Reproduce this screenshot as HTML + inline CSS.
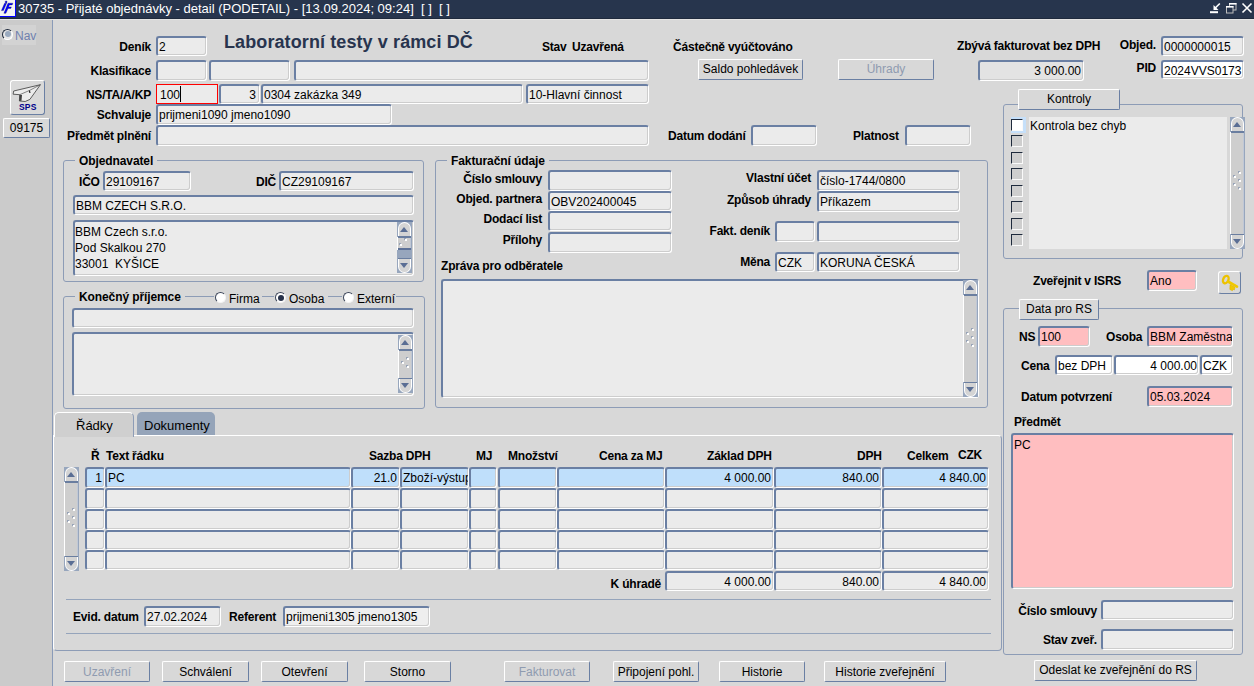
<!DOCTYPE html>
<html><head><meta charset="utf-8">
<style>
html,body{margin:0;padding:0}
body{width:1254px;height:686px;overflow:hidden;background:#d8d8d8;font-family:"Liberation Sans",sans-serif;font-size:12px;color:#000;position:relative}
div,span{box-sizing:border-box}
.a{position:absolute;white-space:nowrap}
.l{position:absolute;font-weight:bold;font-size:12px;line-height:14px;white-space:nowrap;color:#000;letter-spacing:-0.2px}
.r{text-align:right}
.f{position:absolute;background:#ebebeb;border-style:solid;border-width:2px 1px 1px 2px;border-color:#6a7fa3 #fff #fff #6a7fa3;box-shadow:inset -1px -1px 0 #cdcdcd;font-size:12px;line-height:16px;padding:0 1px 0 1px;white-space:nowrap;overflow:hidden;border-radius:3px}
.w{background:#fff}
.pk{background:#ffbec0}
.sel{background:#bfdffb}
.btn{position:absolute;background:#d8d8d8;border-style:solid;border-width:1px;border-color:#fff #6a7fa3 #6a7fa3 #fff;font-size:12px;line-height:18px;text-align:center;white-space:nowrap;border-radius:2px}
.dis{color:#8f9bb0}
.grp{position:absolute;border:1px solid #8d9cb6;border-radius:3px}
.gl{position:absolute;background:#d8d8d8;font-weight:bold;font-size:12px;line-height:14px;padding:0 4px;white-space:nowrap;letter-spacing:-0.1px}
</style></head><body>

<!-- title bar -->
<div class="a" style="left:0;top:0;width:1254px;height:19px;background:#27354d"></div>
<div class="a" style="left:0;top:18px;width:1254px;height:1px;background:#1f2a3d"></div>
<div class="a" style="left:0;top:19px;width:1254px;height:1px;background:#e4e4e4"></div>
<div class="a" style="left:0;top:0;width:16px;height:17px;background:#f4f4f4;border-right:1px solid #0000ff;border-bottom:1px solid #0000ff"></div>
<svg class="a" style="left:0;top:0" width="16" height="16" viewBox="0 0 16 16">
<g fill="#0000ff" stroke="#000040" stroke-width="0.3">
<path d="M4.6 3.2 L6.6 3.2 L3.4 10.6 L1.4 10.6 Z"/>
<circle cx="6.1" cy="1.9" r="1"/>
<path d="M8 3.2 L12.8 3.2 L12.2 4.9 L9.4 4.9 L8.6 6.9 L11.4 6.9 L10.8 8.4 L8 8.4 L5.9 13.3 L3.9 13.3 Z"/>
</g>
</svg>
<div class="a" style="left:18px;top:1px;font-size:13px;line-height:15px;color:#fff">30735 - Přijaté objednávky - detail (PODETAIL) - [13.09.2024; 09:24]&nbsp; [ ]&nbsp; [ ]</div>
<svg class="a" style="left:1208px;top:2px" width="46" height="13" viewBox="0 0 46 13">
<rect x="2" y="9.2" width="8" height="2" fill="#fff"/>
<path d="M11.8 1.5 L6.5 6.8" stroke="#fff" stroke-width="1.6"/>
<path d="M5.5 3 L5.5 8 L10.5 8 Z" fill="#fff"/>
<rect x="21.5" y="1.5" width="6.5" height="6.5" fill="none" stroke="#bdbdbd" stroke-width="1"/>
<rect x="21" y="1" width="7.5" height="1.6" fill="#fff"/>
<rect x="18.5" y="4.5" width="6.5" height="6.5" fill="#27354d" stroke="#bdbdbd" stroke-width="1"/>
<rect x="18" y="4" width="7.5" height="1.6" fill="#fff"/>
<path d="M34.5 1.5 L43.5 10.5 M43.5 1.5 L34.5 10.5" stroke="#fff" stroke-width="1.6"/>
</svg>

<!-- left panel -->
<div class="a" style="left:0;top:20px;width:52px;height:666px;background:#cbcbcb"></div>
<div class="a" style="left:52px;top:20px;width:1px;height:666px;background:#8a9bb8"></div>

<!-- left panel content -->
<div class="a" style="left:2px;top:25px;width:34px;height:20px;background:#d3d3d3"></div>
<div class="a" style="left:2px;top:28.5px;width:11px;height:11px;border-radius:50%;background:#e8e8e8;border:1px solid;border-color:#1e2a3c #fff #fff #1e2a3c"></div>
<div class="a" style="left:4.5px;top:31px;width:6px;height:6px;border-radius:50%;background:#9aaabf"></div>
<div class="a" style="left:15px;top:29px;font-size:12px;line-height:14px;color:#6f80ae">Nav</div>
<div class="a" style="left:10px;top:80px;width:35px;height:35px;background:#d9d9d9;border:1px solid;border-color:#fff #6a7fa3 #6a7fa3 #fff;border-radius:3px"></div>
<svg class="a" style="left:12px;top:83px" width="30" height="20" viewBox="0 0 30 20">
<path d="M1.7 8 L28.4 1.7 L17.9 16.4 L13.2 18.5 L7.4 18 L7.7 11.7 L1.1 11.2 Z" fill="#ececec" stroke="#3a3a3a" stroke-width="0.8"/>
<path d="M7.7 11.7 L17.4 7.5 L28.4 1.7" fill="none" stroke="#555" stroke-width="0.7"/>
<path d="M7.7 11.7 L10 12 L9.5 17.8 L7.4 18 Z" fill="#404040"/>
<path d="M17.4 7.5 L17.9 10" stroke="#202020" stroke-width="1.2"/>
</svg>
<div class="a" style="left:19px;top:103px;font:bold 8.5px 'Liberation Sans';color:#00008c;line-height:9px;letter-spacing:0.2px">SPS</div>
<div class="a" style="left:3px;top:118px;width:47px;height:20px;background:#d9d9d9;border:1px solid;border-color:#fff #6a7fa3 #6a7fa3 #fff;border-radius:2px;font-size:12px;line-height:18px;text-align:center">09175</div>

<!-- top fields -->
<div class="l r" style="right:1103px;top:40px">Deník</div>
<div class="f" style="left:156px;top:36px;width:51px;height:20px;padding-top:1px">2</div>
<div class="a" style="left:224px;top:32px;font:bold 18px 'Liberation Sans';line-height:20px;color:#28344e;letter-spacing:0.1px">Laboratorní testy v rámci DČ</div>
<div class="l" style="left:542px;top:40px">Stav</div>
<div class="l" style="left:572px;top:40px">Uzavřená</div>
<div class="l" style="left:673px;top:40px">Částečně vyúčtováno</div>
<div class="l" style="left:957px;top:39px">Zbývá fakturovat bez DPH</div>
<div class="l r" style="right:98px;top:38px">Objed.</div>
<div class="f" style="left:1161px;top:36px;width:83px;height:20px;padding-top:1px">0000000015</div>

<div class="l r" style="right:1103px;top:64px">Klasifikace</div>
<div class="f" style="left:156px;top:60px;width:51px;height:21px"></div>
<div class="f" style="left:209px;top:60px;width:81px;height:21px"></div>
<div class="f" style="left:294px;top:60px;width:355px;height:21px"></div>
<div class="btn" style="left:698px;top:59px;width:105px;height:21px;line-height:19px">Saldo pohledávek</div>
<div class="btn dis" style="left:838px;top:59px;width:96px;height:21px;line-height:19px">Úhrady</div>
<div class="f r" style="left:978px;top:60px;width:106px;height:21px;padding-top:1px;padding-right:2px;background:#e3e3e3">3 000.00</div>
<div class="l r" style="right:98px;top:61px">PID</div>
<div class="f w" style="left:1161px;top:60px;width:83px;height:19px;padding-top:1px">2024VVS0173</div>

<div class="l r" style="right:1103px;top:88px">NS/TA/A/KP</div>
<div class="a" style="left:156px;top:84px;width:62px;height:20px;border:1px solid #ff0000;background:#ebebeb;padding:2px 0 0 3px;line-height:16px">100</div>
<div class="a" style="left:180px;top:86px;width:1px;height:16px;background:#000"></div>
<div class="f r" style="left:219px;top:84px;width:41px;height:20px;padding-top:1px;padding-right:3px">3</div>
<div class="f" style="left:261px;top:84px;width:262px;height:20px;padding-top:1px">0304 zakázka 349</div>
<div class="f" style="left:526px;top:84px;width:123px;height:20px;padding-top:1px">10-Hlavní činnost</div>

<div class="l r" style="right:1103px;top:108px">Schvaluje</div>
<div class="f" style="left:156px;top:104px;width:236px;height:21px;padding-top:1px">prijmeni1090 jmeno1090</div>
<div class="l r" style="right:1103px;top:129px">Předmět plnění</div>
<div class="f" style="left:156px;top:125px;width:493px;height:21px"></div>
<div class="l" style="left:668px;top:129px">Datum dodání</div>
<div class="f" style="left:751px;top:125px;width:66px;height:21px"></div>
<div class="l" style="left:853px;top:129px">Platnost</div>
<div class="f" style="left:905px;top:125px;width:66px;height:21px"></div>


<!-- Objednavatel -->
<div class="grp" style="left:63px;top:160px;width:361px;height:122px"></div>
<div class="gl" style="left:75px;top:154px">Objednavatel</div>
<div class="l" style="left:79px;top:175px">IČO</div>
<div class="f" style="left:103px;top:171px;width:88px;height:20px;padding-top:1px">29109167</div>
<div class="l" style="left:256px;top:175px">DIČ</div>
<div class="f" style="left:279px;top:171px;width:135px;height:20px;padding-top:1px">CZ29109167</div>
<div class="f" style="left:73px;top:195px;width:341px;height:20px;padding-top:1px">BBM CZECH S.R.O.</div>
<div class="f" style="left:73px;top:220px;width:341px;height:56px;padding-top:2px;padding-left:0">BBM Czech s.r.o.<br>Pod Skalkou 270<br>33001&nbsp; KYŠICE</div>
<div class="a" style="left:397px;top:222px;width:15px;height:51px;background:#97a6bd"></div>
<div class="a" style="left:397px;top:237px;width:14px;height:13px;background:#cecece;border-left:1px solid #fff;border-right:1px solid #c0c8d6"></div>
<div class="a" style="left:398px;top:248px;width:13px;height:2px;background:#5e7297"></div>
<div class="a" style="left:398px;top:222px;width:13px;height:15px;background:#d4d4d4;border:1px solid #fff;border-bottom:0;border-radius:7px 7px 0 0"></div>
<div class="a" style="left:398px;top:236px;width:13px;height:1.5px;background:#6a7ea0"></div>
<div class="a" style="left:400.0px;top:227px;width:0;height:0;border-left:4.5px solid transparent;border-right:4.5px solid transparent;border-bottom:5px solid #5a6e94"></div>
<div class="a" style="left:398px;top:258px;width:13px;height:15px;background:#d4d4d4;border:1px solid #fff;border-top:0;border-radius:0 0 7px 7px"></div>
<div class="a" style="left:398px;top:257.5px;width:13px;height:1.5px;background:#6a7ea0"></div>
<div class="a" style="left:400.0px;top:263px;width:0;height:0;border-left:4.5px solid transparent;border-right:4.5px solid transparent;border-top:5px solid #5a6e94"></div>
<div class="a" style="left:405px;top:239px;width:2px;height:2px;background:#fff;box-shadow:-1px -1px 0 #98a4b8"></div><div class="a" style="left:400px;top:244px;width:2px;height:2px;background:#fff;box-shadow:-1px -1px 0 #98a4b8"></div>

<!-- Fakturacni udaje -->
<div class="grp" style="left:435px;top:160px;width:553px;height:248px"></div>
<div class="gl" style="left:447px;top:154px">Fakturační údaje</div>
<div class="l r" style="right:712px;top:172px">Číslo smlouvy</div>
<div class="f" style="left:548px;top:170px;width:124px;height:21px"></div>
<div class="l r" style="right:712px;top:192px">Objed. partnera</div>
<div class="f" style="left:548px;top:191px;width:124px;height:20px;padding-top:1px">OBV202400045</div>
<div class="l r" style="right:712px;top:212px">Dodací list</div>
<div class="f" style="left:548px;top:211px;width:124px;height:20px"></div>
<div class="l r" style="right:712px;top:233px">Přílohy</div>
<div class="f" style="left:548px;top:232px;width:124px;height:21px"></div>
<div class="l r" style="right:443px;top:171px">Vlastní účet</div>
<div class="f" style="left:817px;top:170px;width:143px;height:21px;padding-top:1px">číslo-1744/0800</div>
<div class="l r" style="right:443px;top:193px">Způsob úhrady</div>
<div class="f" style="left:817px;top:191px;width:143px;height:21px;padding-top:1px">Příkazem</div>
<div class="l r" style="right:484px;top:224px">Fakt. deník</div>
<div class="f" style="left:775px;top:221px;width:40px;height:21px"></div>
<div class="f" style="left:817px;top:221px;width:143px;height:21px"></div>
<div class="l r" style="right:484px;top:255px">Měna</div>
<div class="f" style="left:775px;top:252px;width:40px;height:20px;padding-top:1px">CZK</div>
<div class="f" style="left:817px;top:252px;width:143px;height:20px;padding-top:1px">KORUNA ČESKÁ</div>
<div class="l" style="left:441px;top:259px">Zpráva pro odběratele</div>
<div class="f" style="left:441px;top:279px;width:538px;height:119px"></div>
<div class="a" style="left:963px;top:280px;width:15px;height:117px;background:#97a6bd"></div>
<div class="a" style="left:963px;top:295px;width:14px;height:87px;background:#cecece;border-left:1px solid #fff;border-right:1px solid #c0c8d6"></div>
<div class="a" style="left:964px;top:280px;width:13px;height:15px;background:#d4d4d4;border:1px solid #fff;border-bottom:0;border-radius:7px 7px 0 0"></div>
<div class="a" style="left:964px;top:294px;width:13px;height:1.5px;background:#6a7ea0"></div>
<div class="a" style="left:966.0px;top:285px;width:0;height:0;border-left:4.5px solid transparent;border-right:4.5px solid transparent;border-bottom:5px solid #5a6e94"></div>
<div class="a" style="left:964px;top:382px;width:13px;height:15px;background:#d4d4d4;border:1px solid #fff;border-top:0;border-radius:0 0 7px 7px"></div>
<div class="a" style="left:964px;top:381.5px;width:13px;height:1.5px;background:#6a7ea0"></div>
<div class="a" style="left:966.0px;top:387px;width:0;height:0;border-left:4.5px solid transparent;border-right:4.5px solid transparent;border-top:5px solid #5a6e94"></div>
<div class="a" style="left:972px;top:329px;width:2px;height:2px;background:#fff;box-shadow:-1px -1px 0 #98a4b8"></div>
<div class="a" style="left:967px;top:333px;width:2px;height:2px;background:#fff;box-shadow:-1px -1px 0 #98a4b8"></div>
<div class="a" style="left:972px;top:337px;width:2px;height:2px;background:#fff;box-shadow:-1px -1px 0 #98a4b8"></div>
<div class="a" style="left:967px;top:341px;width:2px;height:2px;background:#fff;box-shadow:-1px -1px 0 #98a4b8"></div>
<div class="a" style="left:972px;top:345px;width:2px;height:2px;background:#fff;box-shadow:-1px -1px 0 #98a4b8"></div>

<!-- Konecny prijemce -->
<div class="grp" style="left:63px;top:296px;width:362px;height:113px"></div>
<div class="gl" style="left:75px;top:290px">Konečný příjemce</div>
<div class="a" style="left:214px;top:290px;width:176px;height:14px;background:transparent"></div>
<div class="a" style="left:214px;top:290px;width:48px;height:14px;background:#d8d8d8"></div>
<div class="a" style="left:274px;top:290px;width:54px;height:14px;background:#d8d8d8"></div>
<div class="a" style="left:342px;top:290px;width:54px;height:14px;background:#d8d8d8"></div>
<div class="a" style="left:215px;top:292px;width:11px;height:11px;border-radius:50%;background:#fff;border:1px solid;border-color:#3c465a #f4f4f4 #f4f4f4 #3c465a"></div>
<div class="a" style="left:229px;top:292px;line-height:14px">Firma</div>
<div class="a" style="left:275px;top:292px;width:11px;height:11px;border-radius:50%;background:#fff;border:1px solid;border-color:#3c465a #f4f4f4 #f4f4f4 #3c465a"></div><div class="a" style="left:277.5px;top:294.5px;width:6px;height:6px;border-radius:50%;background:#26314a"></div>
<div class="a" style="left:289px;top:292px;line-height:14px">Osoba</div>
<div class="a" style="left:343px;top:292px;width:11px;height:11px;border-radius:50%;background:#fff;border:1px solid;border-color:#3c465a #f4f4f4 #f4f4f4 #3c465a"></div>
<div class="a" style="left:357px;top:292px;line-height:14px">Externí</div>
<div class="f" style="left:72px;top:308px;width:342px;height:20px"></div>
<div class="f" style="left:72px;top:332px;width:342px;height:64px"></div>
<div class="a" style="left:398px;top:335px;width:15px;height:58px;background:#97a6bd"></div>
<div class="a" style="left:398px;top:350px;width:14px;height:28px;background:#cecece;border-left:1px solid #fff;border-right:1px solid #c0c8d6"></div>
<div class="a" style="left:399px;top:335px;width:13px;height:15px;background:#d4d4d4;border:1px solid #fff;border-bottom:0;border-radius:7px 7px 0 0"></div>
<div class="a" style="left:399px;top:349px;width:13px;height:1.5px;background:#6a7ea0"></div>
<div class="a" style="left:401.0px;top:340px;width:0;height:0;border-left:4.5px solid transparent;border-right:4.5px solid transparent;border-bottom:5px solid #5a6e94"></div>
<div class="a" style="left:399px;top:378px;width:13px;height:15px;background:#d4d4d4;border:1px solid #fff;border-top:0;border-radius:0 0 7px 7px"></div>
<div class="a" style="left:399px;top:377.5px;width:13px;height:1.5px;background:#6a7ea0"></div>
<div class="a" style="left:401.0px;top:383px;width:0;height:0;border-left:4.5px solid transparent;border-right:4.5px solid transparent;border-top:5px solid #5a6e94"></div>
<div class="a" style="left:407px;top:358px;width:2px;height:2px;background:#fff;box-shadow:-1px -1px 0 #98a4b8"></div>
<div class="a" style="left:402px;top:362px;width:2px;height:2px;background:#fff;box-shadow:-1px -1px 0 #98a4b8"></div>
<div class="a" style="left:407px;top:366px;width:2px;height:2px;background:#fff;box-shadow:-1px -1px 0 #98a4b8"></div>


<!-- Kontroly -->
<div class="grp" style="left:1003px;top:104px;width:240px;height:155px"></div>
<div class="btn" style="left:1018px;top:89px;width:102px;height:21px;background:#d8d8d8;line-height:19px">Kontroly</div>
<div class="a" style="left:1029px;top:117px;width:198px;height:132px;background:#ebebeb"></div>
<div class="a" style="left:1011px;top:117px;width:15px;height:16px;background:#c6e0fa"></div>
<div class="a" style="left:1011px;top:119px;width:12px;height:12px;background:#fff;border:1px solid;border-color:#1e2a3c #fafafa #fafafa #1e2a3c"></div>
<div class="a" style="left:1011px;top:135px;width:12px;height:12px;background:#cecece;border:1px solid;border-color:#1e2a3c #fafafa #fafafa #1e2a3c"></div>
<div class="a" style="left:1011px;top:152px;width:12px;height:12px;background:#cecece;border:1px solid;border-color:#1e2a3c #fafafa #fafafa #1e2a3c"></div>
<div class="a" style="left:1011px;top:168px;width:12px;height:12px;background:#cecece;border:1px solid;border-color:#1e2a3c #fafafa #fafafa #1e2a3c"></div>
<div class="a" style="left:1011px;top:185px;width:12px;height:12px;background:#cecece;border:1px solid;border-color:#1e2a3c #fafafa #fafafa #1e2a3c"></div>
<div class="a" style="left:1011px;top:201px;width:12px;height:12px;background:#cecece;border:1px solid;border-color:#1e2a3c #fafafa #fafafa #1e2a3c"></div>
<div class="a" style="left:1011px;top:218px;width:12px;height:12px;background:#cecece;border:1px solid;border-color:#1e2a3c #fafafa #fafafa #1e2a3c"></div>
<div class="a" style="left:1011px;top:234px;width:12px;height:12px;background:#cecece;border:1px solid;border-color:#1e2a3c #fafafa #fafafa #1e2a3c"></div>

<div class="a" style="left:1030px;top:118px;line-height:16px">Kontrola bez chyb</div>
<div class="a" style="left:1230px;top:117px;width:15px;height:132px;background:#97a6bd"></div>
<div class="a" style="left:1230px;top:132px;width:14px;height:102px;background:#cecece;border-left:1px solid #fff;border-right:1px solid #c0c8d6"></div>
<div class="a" style="left:1231px;top:117px;width:13px;height:15px;background:#d4d4d4;border:1px solid #fff;border-bottom:0;border-radius:7px 7px 0 0"></div>
<div class="a" style="left:1231px;top:131px;width:13px;height:1.5px;background:#6a7ea0"></div>
<div class="a" style="left:1233.0px;top:122px;width:0;height:0;border-left:4.5px solid transparent;border-right:4.5px solid transparent;border-bottom:5px solid #5a6e94"></div>
<div class="a" style="left:1231px;top:234px;width:13px;height:15px;background:#d4d4d4;border:1px solid #fff;border-top:0;border-radius:0 0 7px 7px"></div>
<div class="a" style="left:1231px;top:233.5px;width:13px;height:1.5px;background:#6a7ea0"></div>
<div class="a" style="left:1233.0px;top:239px;width:0;height:0;border-left:4.5px solid transparent;border-right:4.5px solid transparent;border-top:5px solid #5a6e94"></div>
<div class="a" style="left:1239px;top:172px;width:2px;height:2px;background:#fff;box-shadow:-1px -1px 0 #98a4b8"></div>
<div class="a" style="left:1234px;top:176px;width:2px;height:2px;background:#fff;box-shadow:-1px -1px 0 #98a4b8"></div>
<div class="a" style="left:1239px;top:180px;width:2px;height:2px;background:#fff;box-shadow:-1px -1px 0 #98a4b8"></div>
<div class="a" style="left:1234px;top:184px;width:2px;height:2px;background:#fff;box-shadow:-1px -1px 0 #98a4b8"></div>
<div class="a" style="left:1239px;top:188px;width:2px;height:2px;background:#fff;box-shadow:-1px -1px 0 #98a4b8"></div>

<div class="l" style="left:1033px;top:274px">Zveřejnit v ISRS</div>
<div class="f pk" style="left:1147px;top:270px;width:50px;height:21px;padding-top:1px">Ano</div>
<div class="a" style="left:1218px;top:271px;width:23px;height:23px;background:#d8d8d8;border:1px solid;border-color:#fff #6a7fa3 #6a7fa3 #fff;border-width:1px;border-radius:3px"></div>
<svg class="a" style="left:1218px;top:271px" width="23" height="23" viewBox="0 0 23 23">
<ellipse cx="7.8" cy="8.6" rx="2.6" ry="3.9" transform="rotate(25 7.8 8.6)" fill="none" stroke="#ecc200" stroke-width="2.3"/>
<path d="M10 10.5 L19 15.6" stroke="#f0c800" stroke-width="2.6" stroke-linecap="round"/>
<path d="M12 13.6 L17 16.3 L16.4 19 L15 18.2 L14.4 19.8 L11.8 18.4 Z" fill="#f0c800" stroke="#dcb000" stroke-width="0.5"/>
</svg>

<!-- Data pro RS -->
<div class="grp" style="left:1003px;top:308px;width:240px;height:347px"></div>
<div class="btn" style="left:1019px;top:299px;width:80px;height:21px;background:#d8d8d8;line-height:19px">Data pro RS</div>
<div class="l" style="left:1019px;top:330px">NS</div>
<div class="f pk" style="left:1038px;top:326px;width:52px;height:21px;padding-top:1px">100</div>
<div class="l" style="left:1106px;top:330px">Osoba</div>
<div class="f pk" style="left:1147px;top:326px;width:86px;height:21px;padding-top:1px">BBM Zaměstnanec</div>
<div class="l" style="left:1021px;top:359px">Cena</div>
<div class="f w" style="left:1055px;top:355px;width:58px;height:20px;padding-top:1px">bez DPH</div>
<div class="f w r" style="left:1114px;top:355px;width:85px;height:20px;padding-top:1px">4 000.00</div>
<div class="f w" style="left:1200px;top:355px;width:33px;height:20px;padding-top:1px">CZK</div>
<div class="l" style="left:1021px;top:390px">Datum potvrzení</div>
<div class="f pk" style="left:1147px;top:386px;width:86px;height:21px;padding-top:1px">05.03.2024</div>
<div class="l" style="left:1014px;top:415px">Předmět</div>
<div class="f pk" style="left:1011px;top:433px;width:223px;height:156px;padding-top:2px">PC</div>
<div class="l r" style="right:157px;top:604px">Číslo smlouvy</div>
<div class="f" style="left:1101px;top:600px;width:133px;height:20px"></div>
<div class="l r" style="right:157px;top:633px">Stav zveř.</div>
<div class="f" style="left:1101px;top:629px;width:133px;height:21px"></div>
<div class="btn" style="left:1034px;top:660px;width:163px;height:21px;line-height:19px">Odeslat ke zveřejnění do RS</div>


<!-- tabs -->
<div class="a" style="left:53px;top:435px;width:949px;height:216px;border:1px solid #8d9cb6;border-top:1px solid #fff;border-left:1px solid #fff;border-radius:0 4px 4px 4px"></div>
<div class="a" style="left:54px;top:412px;width:80px;height:25px;background:#cfcfcf;border-top:1px solid #fff;border-left:1px solid #fff;border-right:1px solid #8d9cb6;border-radius:5px 5px 0 0"></div>
<div class="a" style="left:76px;top:418px;font-size:13px;line-height:16px">Řádky</div>
<div class="a" style="left:137px;top:412px;width:78px;height:23px;background:#95a4b9;border-radius:5px 5px 0 0"></div>
<div class="a" style="left:144px;top:418px;font-size:13px;line-height:16px">Dokumenty</div>

<div class="l" style="left:91px;top:449px">Ř</div>
<div class="l" style="left:106px;top:449px">Text řádku</div>
<div class="l" style="left:369px;top:449px">Sazba DPH</div>
<div class="l" style="left:476px;top:449px">MJ</div>
<div class="l" style="left:508px;top:449px">Množství</div>
<div class="l" style="left:599px;top:449px">Cena za MJ</div>
<div class="l" style="left:707px;top:449px">Základ DPH</div>
<div class="l" style="left:857px;top:449px">DPH</div>
<div class="l" style="left:907px;top:449px">Celkem</div>
<div class="l" style="left:958px;top:448px">CZK</div>
<div class="f sel r" style="left:85px;top:467px;width:20px;height:21px;padding-top:1px;padding-right:2px;">1</div>
<div class="f sel" style="left:105px;top:467px;width:246px;height:21px;padding-top:1px;">PC</div>
<div class="f sel r" style="left:351px;top:467px;width:49px;height:21px;padding-top:1px;padding-right:2px;">21.0</div>
<div class="f sel" style="left:400px;top:467px;width:69px;height:21px;padding-top:1px;">Zboží-výstup</div>
<div class="f sel" style="left:469px;top:467px;width:28px;height:21px;padding-top:1px;"></div>
<div class="f sel" style="left:498px;top:467px;width:59px;height:21px;padding-top:1px;"></div>
<div class="f sel" style="left:557px;top:467px;width:108px;height:21px;padding-top:1px;"></div>
<div class="f sel r" style="left:665px;top:467px;width:109px;height:21px;padding-top:1px;padding-right:2px;">4 000.00</div>
<div class="f sel r" style="left:774px;top:467px;width:108px;height:21px;padding-top:1px;padding-right:2px;">840.00</div>
<div class="f sel r" style="left:882px;top:467px;width:107px;height:21px;padding-top:1px;padding-right:2px;">4 840.00</div>
<div class="f r" style="left:85px;top:488px;width:20px;height:21px;padding-top:1px;padding-right:2px;"></div>
<div class="f" style="left:105px;top:488px;width:246px;height:21px;padding-top:1px;"></div>
<div class="f r" style="left:351px;top:488px;width:49px;height:21px;padding-top:1px;padding-right:2px;"></div>
<div class="f" style="left:400px;top:488px;width:69px;height:21px;padding-top:1px;"></div>
<div class="f" style="left:469px;top:488px;width:28px;height:21px;padding-top:1px;"></div>
<div class="f" style="left:498px;top:488px;width:59px;height:21px;padding-top:1px;"></div>
<div class="f" style="left:557px;top:488px;width:108px;height:21px;padding-top:1px;"></div>
<div class="f r" style="left:665px;top:488px;width:109px;height:21px;padding-top:1px;padding-right:2px;"></div>
<div class="f r" style="left:774px;top:488px;width:108px;height:21px;padding-top:1px;padding-right:2px;"></div>
<div class="f r" style="left:882px;top:488px;width:107px;height:21px;padding-top:1px;padding-right:2px;"></div>
<div class="f r" style="left:85px;top:509px;width:20px;height:21px;padding-top:1px;padding-right:2px;"></div>
<div class="f" style="left:105px;top:509px;width:246px;height:21px;padding-top:1px;"></div>
<div class="f r" style="left:351px;top:509px;width:49px;height:21px;padding-top:1px;padding-right:2px;"></div>
<div class="f" style="left:400px;top:509px;width:69px;height:21px;padding-top:1px;"></div>
<div class="f" style="left:469px;top:509px;width:28px;height:21px;padding-top:1px;"></div>
<div class="f" style="left:498px;top:509px;width:59px;height:21px;padding-top:1px;"></div>
<div class="f" style="left:557px;top:509px;width:108px;height:21px;padding-top:1px;"></div>
<div class="f r" style="left:665px;top:509px;width:109px;height:21px;padding-top:1px;padding-right:2px;"></div>
<div class="f r" style="left:774px;top:509px;width:108px;height:21px;padding-top:1px;padding-right:2px;"></div>
<div class="f r" style="left:882px;top:509px;width:107px;height:21px;padding-top:1px;padding-right:2px;"></div>
<div class="f r" style="left:85px;top:530px;width:20px;height:20px;padding-top:1px;padding-right:2px;"></div>
<div class="f" style="left:105px;top:530px;width:246px;height:20px;padding-top:1px;"></div>
<div class="f r" style="left:351px;top:530px;width:49px;height:20px;padding-top:1px;padding-right:2px;"></div>
<div class="f" style="left:400px;top:530px;width:69px;height:20px;padding-top:1px;"></div>
<div class="f" style="left:469px;top:530px;width:28px;height:20px;padding-top:1px;"></div>
<div class="f" style="left:498px;top:530px;width:59px;height:20px;padding-top:1px;"></div>
<div class="f" style="left:557px;top:530px;width:108px;height:20px;padding-top:1px;"></div>
<div class="f r" style="left:665px;top:530px;width:109px;height:20px;padding-top:1px;padding-right:2px;"></div>
<div class="f r" style="left:774px;top:530px;width:108px;height:20px;padding-top:1px;padding-right:2px;"></div>
<div class="f r" style="left:882px;top:530px;width:107px;height:20px;padding-top:1px;padding-right:2px;"></div>
<div class="f r" style="left:85px;top:550px;width:20px;height:20px;padding-top:1px;padding-right:2px;"></div>
<div class="f" style="left:105px;top:550px;width:246px;height:20px;padding-top:1px;"></div>
<div class="f r" style="left:351px;top:550px;width:49px;height:20px;padding-top:1px;padding-right:2px;"></div>
<div class="f" style="left:400px;top:550px;width:69px;height:20px;padding-top:1px;"></div>
<div class="f" style="left:469px;top:550px;width:28px;height:20px;padding-top:1px;"></div>
<div class="f" style="left:498px;top:550px;width:59px;height:20px;padding-top:1px;"></div>
<div class="f" style="left:557px;top:550px;width:108px;height:20px;padding-top:1px;"></div>
<div class="f r" style="left:665px;top:550px;width:109px;height:20px;padding-top:1px;padding-right:2px;"></div>
<div class="f r" style="left:774px;top:550px;width:108px;height:20px;padding-top:1px;padding-right:2px;"></div>
<div class="f r" style="left:882px;top:550px;width:107px;height:20px;padding-top:1px;padding-right:2px;"></div>
<div class="a" style="left:64px;top:467px;width:15px;height:104px;background:#97a6bd"></div>
<div class="a" style="left:64px;top:482px;width:14px;height:74px;background:#cecece;border-left:1px solid #fff;border-right:1px solid #c0c8d6"></div>
<div class="a" style="left:65px;top:467px;width:13px;height:15px;background:#d4d4d4;border:1px solid #fff;border-bottom:0;border-radius:7px 7px 0 0"></div>
<div class="a" style="left:65px;top:481px;width:13px;height:1.5px;background:#6a7ea0"></div>
<div class="a" style="left:67.0px;top:472px;width:0;height:0;border-left:4.5px solid transparent;border-right:4.5px solid transparent;border-bottom:5px solid #5a6e94"></div>
<div class="a" style="left:65px;top:556px;width:13px;height:15px;background:#d4d4d4;border:1px solid #fff;border-top:0;border-radius:0 0 7px 7px"></div>
<div class="a" style="left:65px;top:555.5px;width:13px;height:1.5px;background:#6a7ea0"></div>
<div class="a" style="left:67.0px;top:561px;width:0;height:0;border-left:4.5px solid transparent;border-right:4.5px solid transparent;border-top:5px solid #5a6e94"></div>
<div class="a" style="left:73px;top:509px;width:2px;height:2px;background:#fff;box-shadow:-1px -1px 0 #98a4b8"></div>
<div class="a" style="left:68px;top:513px;width:2px;height:2px;background:#fff;box-shadow:-1px -1px 0 #98a4b8"></div>
<div class="a" style="left:73px;top:517px;width:2px;height:2px;background:#fff;box-shadow:-1px -1px 0 #98a4b8"></div>
<div class="a" style="left:68px;top:521px;width:2px;height:2px;background:#fff;box-shadow:-1px -1px 0 #98a4b8"></div>
<div class="a" style="left:73px;top:525px;width:2px;height:2px;background:#fff;box-shadow:-1px -1px 0 #98a4b8"></div>
<div class="l r" style="right:593px;top:577px">K úhradě</div>
<div class="f r" style="left:665px;top:571px;width:109px;height:20px;padding-top:1px;padding-right:2px">4 000.00</div>
<div class="f r" style="left:774px;top:571px;width:108px;height:20px;padding-top:1px;padding-right:2px">840.00</div>
<div class="f r" style="left:882px;top:571px;width:107px;height:20px;padding-top:1px;padding-right:2px">4 840.00</div>
<div class="a" style="left:66px;top:599px;width:925px;height:1px;background:#95a4bb"></div>
<div class="l" style="left:73px;top:610px">Evid. datum</div>
<div class="f" style="left:144px;top:606px;width:77px;height:21px;padding-top:1px">27.02.2024</div>
<div class="l" style="left:229px;top:610px">Referent</div>
<div class="f" style="left:283px;top:606px;width:147px;height:21px;padding-top:1px;background:#eeeeee">prijmeni1305 jmeno1305</div>
<div class="a" style="left:66px;top:633px;width:925px;height:1px;background:#95a4bb"></div>

<!-- bottom buttons -->
<div class="btn dis" style="left:64px;top:661px;width:86px;height:21px;line-height:20px">Uzavření</div>
<div class="btn" style="left:162px;top:661px;width:87px;height:21px;line-height:20px">Schválení</div>
<div class="btn" style="left:261px;top:661px;width:87px;height:21px;line-height:20px">Otevření</div>
<div class="btn" style="left:364px;top:661px;width:87px;height:21px;line-height:20px">Storno</div>
<div class="btn dis" style="left:504px;top:661px;width:86px;height:21px;line-height:20px">Fakturovat</div>
<div class="btn" style="left:613px;top:661px;width:86px;height:21px;line-height:20px">Připojení pohl.</div>
<div class="btn" style="left:719px;top:661px;width:86px;height:21px;line-height:20px">Historie</div>
<div class="btn" style="left:824px;top:661px;width:122px;height:21px;line-height:20px">Historie zveřejnění</div>

</body></html>
